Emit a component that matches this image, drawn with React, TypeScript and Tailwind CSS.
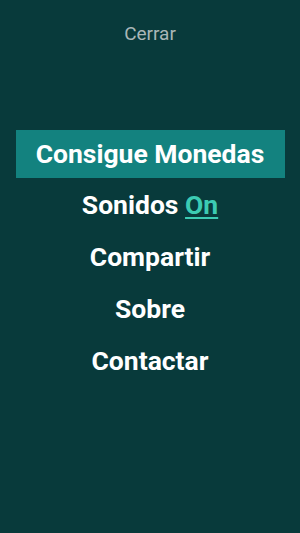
export default function App() {
  return (
    <div className="w-[300px] h-[533px] bg-[#083a3b] flex flex-col items-center" style={{ fontFamily: "Roboto, sans-serif" }}>
      <div className="pt-[22px] text-[19px] leading-[24px] text-[#a9b7b7]">Cerrar</div>
      <div className="mt-[84px] w-full flex flex-col items-center font-bold text-white text-[26.5px] leading-[32px]">
        <div className="w-[269px] h-[48px] bg-[#13827f] flex items-center justify-center">Consigue Monedas</div>
        <div className="h-[52px] flex items-center pt-[2px]">
          Sonidos&nbsp;<span className="text-[#3ccbb3] underline decoration-[2px] underline-offset-[3px]">On</span>
        </div>
        <div className="h-[52px] flex items-center pt-[2px]">Compartir</div>
        <div className="h-[52px] flex items-center pt-[2px]">Sobre</div>
        <div className="h-[52px] flex items-center pt-[2px]">Contactar</div>
      </div>
    </div>
  );
}
